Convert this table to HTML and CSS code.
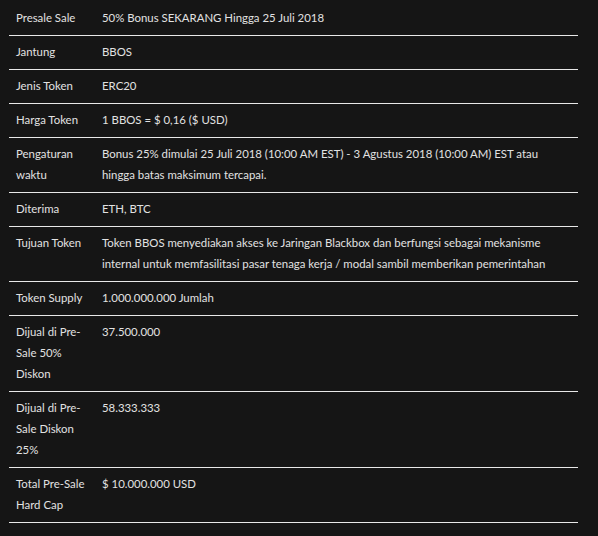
FILE: index.html
```html
<!DOCTYPE html>
<html lang="id">
<head>
<meta charset="utf-8">
<title>Token Sale</title>
<link rel="stylesheet" href="styles.css">
</head>
<body>
<table class="info">
  <tbody>
    <tr class="first"><td class="k">Presale Sale</td><td class="v">50% Bonus SEKARANG Hingga 25 Juli 2018</td></tr>
    <tr><td class="k">Jantung</td><td class="v">BBOS</td></tr>
    <tr><td class="k">Jenis Token</td><td class="v">ERC20</td></tr>
    <tr><td class="k">Harga Token</td><td class="v">1 BBOS = $ 0,16 ($ USD)</td></tr>
    <tr><td class="k">Pengaturan waktu</td><td class="v">Bonus 25% dimulai 25 Juli 2018 (10:00 AM EST) - 3 Agustus 2018 (10:00 AM) EST atau hingga batas maksimum tercapai.</td></tr>
    <tr><td class="k">Diterima</td><td class="v">ETH, BTC</td></tr>
    <tr><td class="k">Tujuan Token</td><td class="v">Token BBOS menyediakan akses ke Jaringan Blackbox dan berfungsi sebagai mekanisme internal untuk memfasilitasi pasar tenaga kerja / modal sambil memberikan pemerintahan</td></tr>
    <tr><td class="k">Token Supply</td><td class="v">1.000.000.000 Jumlah</td></tr>
    <tr><td class="k">Dijual di Pre-Sale 50% Diskon</td><td class="v">37.500.000</td></tr>
    <tr><td class="k">Dijual di Pre-Sale Diskon 25%</td><td class="v">58.333.333</td></tr>
    <tr><td class="k">Total Pre-Sale Hard Cap</td><td class="v">$ 10.000.000 USD</td></tr>
  </tbody>
</table>
</body>
</html>
```
FILE: styles.css
```css
html, body {
  margin: 0;
  padding: 0;
  background: #151515;
}
body {
  padding: 1px 20px 0 9px;
  font-family: Lato, "Liberation Sans", sans-serif;
  font-size: 11.4px;
  line-height: 21px;
  color: #e2e2e2;
}
.info {
  width: 569px;
  border-collapse: collapse;
  table-layout: fixed;
}
.info td {
  vertical-align: top;
  padding: 5px 0 7px 0;
  border-bottom: 1px solid #e8e8e8;
}
.info .first td {
  padding-top: 6px;
  padding-bottom: 7px;
}
.info td.k {
  width: 78px;
  padding-left: 7px;
  padding-right: 8px;
}
.info td.v {
  padding-right: 24px;
}
```
